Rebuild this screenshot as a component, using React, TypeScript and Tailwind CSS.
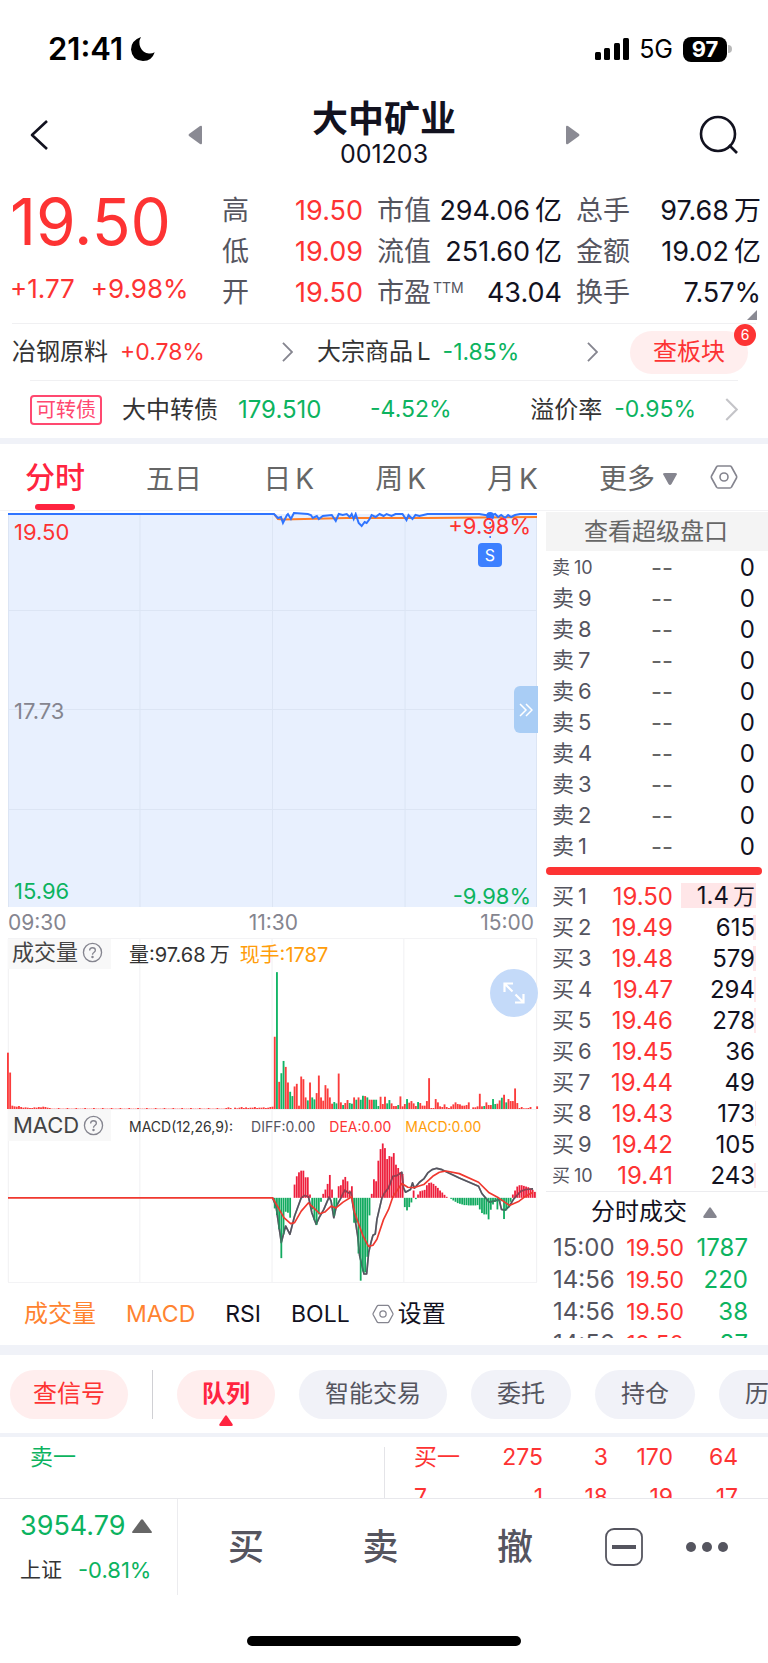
import React from 'react';

const RED = 'text-[#fd3333]';
const GREEN = 'text-[#0cb35f]';

type Stat = { label: string; sup?: string; value: string; unit?: string; color?: string };

const stats: { width: string; items: Stat[] }[] = [
  {
    width: 'w-[141px]',
    items: [
      { label: '高', value: '19.50', color: RED },
      { label: '低', value: '19.09', color: RED },
      { label: '开', value: '19.50', color: RED },
    ],
  },
  {
    width: 'w-[185px]',
    items: [
      { label: '市值', value: '294.06', unit: '亿' },
      { label: '流值', value: '251.60', unit: '亿' },
      { label: '市盈', sup: 'TTM', value: '43.04' },
    ],
  },
  {
    width: 'w-[185px]',
    items: [
      { label: '总手', value: '97.68', unit: '万' },
      { label: '金额', value: '19.02', unit: '亿' },
      { label: '换手', value: '7.57%' },
    ],
  },
];

const asks = [10, 9, 8, 7, 6, 5, 4, 3, 2, 1];

const bids = [
  { level: 1, price: '19.50', size: '1.4', unit: '万', bar: 75 },
  { level: 2, price: '19.49', size: '615', bar: 3 },
  { level: 3, price: '19.48', size: '579', bar: 3 },
  { level: 4, price: '19.47', size: '294', bar: 2 },
  { level: 5, price: '19.46', size: '278', bar: 2 },
  { level: 6, price: '19.45', size: '36', bar: 0 },
  { level: 7, price: '19.44', size: '49', bar: 0 },
  { level: 8, price: '19.43', size: '173', bar: 1 },
  { level: 9, price: '19.42', size: '105', bar: 0 },
  { level: 10, price: '19.41', size: '243', bar: 2 },
];

const deals = [
  ['15:00', '19.50', '1787'],
  ['14:56', '19.50', '220'],
  ['14:56', '19.50', '38'],
  ['14:56', '19.50', '87'],
];

const priceLine =
  '0,2 267,2 271,6 274,5 276,11 280,3 281,2 284,7 287,1 301,2 304,3 306,6 310,4 312,7 316,4 325,3 329,9 332,2 336,3 340,2 343,5 345,2 347,7 349,2 352,11 355,14 358,10 360,11 363,7 365,3 369,5 373,2 377,4 380,2 385,4 389,2 396,2 400,8 402,3 406,7 409,3 413,4 417,3 421,2 473,2 479,3 484,4 489,2 492,5 495,3 499,6 502,3 505,5 509,3 514,2 531,2';

// One bar per minute, 240 minutes a day. Negative values are falling minutes.
const STEP = 6.64;

const morningVolume = [170, 110, 10, 8, 7, 9, 6, 4, 5, 4, 3, 3, 5, 4, 6, 5, 7, 6, 4, 3];
const noonVolume = [5, 3, 0, 4, 2, 4, 6, 3, 5, 3, 4, 4, 6, 3, 4, 4, 5, 3, 4, 6];
const afternoonVolume = [
  7, 218, -413, 82, -108, -145, 127, 80, -52, -39, 68, 76, 10, 98, 90, 35, -26, 80, -35, -29,
  48, 101, 35, 25, 72, 62, 35, 16, -21, -17, 107, 20, -12, 18, 27, -18, -16, 35, -28, 35,
  -28, -40, 39, -35, 28, 28, -28, -28, -9, 37, 15, 37, -17, -27, 17, 9, 9, -12, 38, 8,
  15, -30, 19, 24, 17, 9, -21, 18, 10, 10, 24, 93, 3, 3, 30, 20, 8, 6, 14, 6,
  3, 8, 14, 20, 15, 14, 10, 10, 12, 20, 0, 5, 5, 8, 46, 8, -9, 20, 12, 12,
  -30, -15, 16, 26, -34, 43, -20, 30, 24, 24, 62, 18, 3, 6, 2, 2, 3, 6, 0, 0, 8,
];
const volume = [
  ...morningVolume,
  ...Array.from({ length: 80 }, (_, i) => (i % 4 === 3 ? 3 : 1)),
  ...noonVolume,
  ...afternoonVolume,
];

const macdBars = [
  -32, -52, -95, -182, -110, -42, -45, -60, 0, 40, 65, 77, 82, 82, 62, 62, 10, -35, -68, -82,
  -50, -12, 12, 25, 42, 69, 25, -55, -28, 35, 38, 55, 63, 50, 22, 35, -75, -75, -168, -250,
  -222, -225, -178, -53, 12, 56, 50, 112, 147, 164, 150, 117, 126, 124, 135, 100, 90, 78, 72, -28,
  -38, -28, -14, 22, -4, 10, 20, 22, 24, 38, 45, 46, 42, 36, 30, 22, 16, 9, 3, 0,
  -3, -8, -12, -16, -18, -20, -22, -22, -23, -23, -23, -23, -22, -35, -46, -50, -50, -65, -36, -20,
  -12, -35, -12, -10, -64, -38, -30, -12, 10, 22, 34, 38, 38, 36, 34, 32, 28, 24, 18,
];

const diffLine =
  '38,265 48,290 64,400 77,350 90,375 104,320 124,265 134,258 146,262 156,310 169,345 178,325 192,300 208,262 214,275 222,325 230,290 242,268 255,242 266,250 274,248 280,290 294,380 300,440 313,495 321,495 327,430 334,400 340,378 347,374 352,330 367,265 375,250 387,235 400,200 412,198 427,188 432,235 438,248 453,240 459,220 465,236 480,218 493,208 505,190 518,180 532,176 548,180 600,205 658,230 668,252 690,278 704,275 720,270 727,300 738,302 751,290 764,268 785,245 800,240 822,238';
const deaLine =
  '38,265 72,325 92,343 104,340 124,305 146,280 156,290 180,313 195,308 214,290 228,296 250,278 276,262 285,310 310,380 327,412 340,408 352,390 372,330 387,300 400,262 427,222 445,233 465,234 493,225 520,200 540,188 560,184 600,192 658,218 690,250 718,265 751,288 780,275 800,260 822,248';

const Chevron = ({ className }: { className: string }) => (
  <svg viewBox="0 0 12 22" className={className} fill="none" stroke="currentColor" strokeWidth="2">
    <path d="M1 1l10 10L1 21" />
  </svg>
);

const HexNut = ({ className }: { className: string }) => (
  <svg viewBox="0 0 28 26" className={className} fill="none" stroke="#85858f" strokeWidth="1.6" strokeLinejoin="round">
    <path d="M8 2h12q1 0 1.500 1l5 9q.5 1 0 2l-5 9q-.5 1-1.500 1H8q-1 0-1.500-1l-5-9q-.5-1 0-2l5-9Q7 2 8 2z" />
    <circle cx="14" cy="13" r="4" />
  </svg>
);

const Help = () => (
  <svg viewBox="0 0 22 22" className="h-[21px] w-[21px]" fill="none" stroke="#85858f" strokeWidth="1.400">
    <circle cx="11" cy="11" r="9.500" />
    <path d="M8 9q0-3 3-3t3 2.700q0 1.300-1.600 2.300-1.400.9-1.400 2.300" />
    <circle cx="11" cy="15.700" r=".6" fill="#85858f" />
  </svg>
);

const StatusBar = () => (
  <div className="flex h-[98px] items-center justify-between pl-12 pr-[36px]">
    <div className="flex items-center gap-2 text-[31px] font-semibold text-black">
      21:41
      <svg viewBox="0 0 24 24" className="h-6 w-6" fill="#000">
        <path d="M10 0Q7 5 9.500 10.500T18 16.500q3 .3 5.700-1.200Q21 24 12 24 1 23.500 0 12.500 0 3.500 10 0z" />
      </svg>
    </div>
    <div className="flex items-center gap-[10px]">
      <svg viewBox="0 0 34 24" className="h-6 w-[34px]" fill="#000">
        <rect x="0" y="15" width="6" height="8" rx="1.500" />
        <rect x="9" y="11" width="6" height="12" rx="1.500" />
        <rect x="19" y="6" width="6" height="17" rx="1.500" />
        <rect x="28" y="1" width="6" height="22" rx="1.500" />
      </svg>
      <span className="text-[25px] leading-7 text-black">5G</span>
      <span className="flex items-center gap-px">
        <span className="flex h-[25px] w-[44px] items-center justify-center rounded-lg bg-black text-[22px] font-bold text-white">97</span>
        <span className="h-2 w-1 rounded-r-full bg-[#b9b9b9]" />
      </span>
    </div>
  </div>
);

const Header = () => (
  <header className="mb-2 flex h-[74px] items-center justify-between px-[29px] text-[#12121f]">
    <button aria-label="返回" className="w-[40px]">
      <svg viewBox="0 0 20 30" className="h-[30px] w-5" fill="none" stroke="currentColor" strokeWidth="2.600" strokeLinejoin="round">
        <path d="M18 1L3 15l15 14" />
      </svg>
    </button>
    <div className="flex w-[392px] items-center justify-between">
      <button aria-label="上一只">
        <svg viewBox="0 0 14 20" className="h-5 w-[14px]" fill="#8a8a93">
          <path d="M12 1q2-1 2 1v16q0 2-2 1L1 11q-1-1 0-2z" />
        </svg>
      </button>
      <div className="flex flex-col items-center pb-1">
        <h1 className="text-[36px] font-bold leading-[42px]">大中矿业</h1>
        <span className="text-[25px] leading-7">001203</span>
      </div>
      <button aria-label="下一只">
        <svg viewBox="0 0 14 20" className="h-5 w-[14px]" fill="#8a8a93">
          <path d="M2 1Q0 0 0 2v16q0 2 2 1l11-8q1-1 0-2z" />
        </svg>
      </button>
    </div>
    <button aria-label="搜索" className="w-[40px]">
      <svg viewBox="0 0 40 40" className="h-10 w-10" fill="none" stroke="currentColor" strokeWidth="2.600">
        <circle cx="19" cy="19" r="17" />
        <path d="M30 30l8 8" />
      </svg>
    </button>
  </header>
);

const Quote = () => (
  <section className="relative flex h-[143px] justify-between pl-[10px] pr-[7px] pt-[10px]">
    <div className="text-[#fd3333]">
      <div className="text-[64px] leading-[64px]">19.50</div>
      <div className="flex gap-4 pt-[15px] text-[26px] leading-10">
        <span>+1.77</span>
        <span>+9.98%</span>
      </div>
    </div>
    <div className="flex gap-[14px]">
      {stats.map((col) => (
        <dl key={col.items[0].label} className={col.width}>
          {col.items.map((s) => (
            <div key={s.label} className="flex h-[41px] items-center justify-between whitespace-nowrap leading-[41px]">
              <dt className="flex text-[27px] text-[#55555f]">
                {s.label}
                {s.sup && <sup className="top-0 pl-0.5 pt-1 text-[14px] leading-6">{s.sup}</sup>}
              </dt>
              <dd className={`text-[27px] ${s.color || 'text-[#12121f]'}`}>
                {s.value}
                {s.unit && <span className="pl-[5px]">{s.unit}</span>}
              </dd>
            </div>
          ))}
        </dl>
      ))}
    </div>
    <svg viewBox="0 0 10 10" className="absolute bottom-[3px] right-[11px] h-[10px] w-[10px]" fill="#8a8a93">
      <path d="M10 0v10H0z" />
    </svg>
  </section>
);

const Related = () => (
  <section className="text-[24px] text-[#333]">
    <div className="mx-3 flex h-[57px] items-center border-t border-[#f0f0f2]">
      <a href="#sector" className="flex w-[305px] items-center whitespace-nowrap pr-6">
        冶钢原料
        <span className={`flex-1 pl-3 text-[23px] ${RED}`}>+0.78%</span>
        <Chevron className="h-5 w-[11px] text-[#85858f]" />
      </a>
      <a href="#commodity" className="flex flex-1 items-center whitespace-nowrap pr-[32px]">
        大宗商品<span className="pl-1">L</span>
        <span className={`flex-1 pl-3 text-[23px] ${GREEN}`}>-1.85%</span>
        <Chevron className="h-5 w-[11px] text-[#85858f]" />
      </a>
      <button className={`relative mr-2 h-[43px] w-[118px] rounded-full bg-[#ffeeee] ${RED}`}>
        查板块
        <span className="absolute -right-2 -top-[7px] flex h-[22px] w-[22px] items-center justify-center rounded-full bg-[#fd3333] text-[14px] text-white">6</span>
      </button>
    </div>
    <a href="#bond" className="mx-[30px] flex h-[58px] items-center whitespace-nowrap border-t border-[#f0f0f2]">
      <span className="flex h-[30px] w-[72px] items-center justify-center rounded border-2 border-[#ff4970] text-[20px] text-[#ff4970]">可转债</span>
      <span className="pl-5">大中转债</span>
      <span className={`w-[152px] pl-5 ${GREEN}`}>179.510</span>
      <span className={`flex-1 text-[23px] ${GREEN}`}>-4.52%</span>
      <span>溢价率</span>
      <span className={`pl-3 pr-[29px] text-[23px] ${GREEN}`}>-0.95%</span>
      <Chevron className="h-[23px] w-[13px] text-[#c4c4c8]" />
    </a>
  </section>
);

const Tabs = () => (
  <nav className="flex h-[67px] items-center whitespace-nowrap border-b border-[#f3f3f5] pl-[25px] pr-[30px] text-[28px] text-[#666]">
    <div className="flex h-full flex-1 items-center justify-between pr-[33px]">
      <button className="relative h-full text-[30px] font-medium text-[#ff2440]">
        分时
        <span className="absolute bottom-0 left-[10px] h-[6px] w-10 rounded-full bg-[#ff2440]" />
      </button>
      <button className="pt-1">五日</button>
      <button className="pt-1">日<span className="pl-1">K</span></button>
      <button className="pt-1">周<span className="pl-1">K</span></button>
      <button className="pt-1">月<span className="pl-1">K</span></button>
      <button className="flex items-center gap-2 pt-1">
        更多
        <svg viewBox="0 0 14 12" className="h-3 w-[14px]" fill="#85858f">
          <path d="M2 0h10q3 0 1.500 2L8.500 11Q7 13 5.500 11L.5 2Q-1 0 2 0z" />
        </svg>
      </button>
    </div>
    <button aria-label="图表设置">
      <HexNut className="h-[28px] w-[28px]" />
    </button>
  </nav>
);

const PriceChart = () => (
  <div className="relative h-[395px] text-[22px] leading-7">
    <svg viewBox="0 0 531 395" preserveAspectRatio="none" className="h-full w-full">
      <rect y="2" width="531" height="393" fill="#e8f0fe" />
      <path d="M132.500 2v393M265.500 2v393M398.500 2v393M0 98.500h531M0 197.500h531M0 297.500h531M.5 2v393M530.500 2v393" stroke="#dce5f4" fill="none" />
      <polyline points="267,2 271,7 276,7.500 340,6 420,6 531,5" fill="none" stroke="#ff7d26" strokeWidth="2" />
      <polyline points={priceLine} fill="none" stroke="#2f74ff" strokeWidth="2" />
      <circle cx="484" cy="4" r="4" fill="#2f74ff" />
      <path d="M484 10v20" stroke="#2f74ff" strokeWidth="1.500" strokeDasharray="2 5" />
    </svg>
    <span className={`absolute left-[6px] top-[6px] ${RED}`}>19.50</span>
    <span className={`absolute right-[6px] top-0 ${RED}`}>+9.98%</span>
    <span className="absolute left-[6px] top-[185px] text-[#85858f]">17.73</span>
    <span className={`absolute bottom-[2px] left-[6px] ${GREEN}`}>15.96</span>
    <span className={`absolute -bottom-[3px] right-[6px] ${GREEN}`}>-9.98%</span>
    <span className="absolute right-[35px] top-[31px] flex h-6 w-6 items-center justify-center rounded bg-[#3d80ff] text-[16px] text-white">S</span>
    <button aria-label="展开" className="absolute -right-px top-[174px] flex h-[47px] w-6 items-center justify-center rounded-l-md bg-[#a9cdf5]">
      <svg viewBox="0 0 14 14" className="h-[14px] w-[14px]" fill="none" stroke="#fff" strokeWidth="1.500">
        <path d="M1 1l6 6-6 6M7 1l6 6-6 6" />
      </svg>
    </button>
  </div>
);

const VolumeChart = () => (
  <div className="relative h-[172px] border-y border-[#f3f3f5]">
    <svg viewBox="0 0 1593 513" preserveAspectRatio="none" className="h-full w-full overflow-visible">
      <path d="M1 0v513M397 0v513M795 0v513M1192 0v513M1592 0v513" stroke="#f0f0f2" strokeWidth="3" />
      {volume.map((v, i) => (
        <rect key={i} x={i * STEP - 3} y={513 - Math.abs(v)} width="5.600" height={Math.abs(v)} fill={v < 0 ? '#12b566' : '#fb3c3c'} />
      ))}
    </svg>
    <div className="absolute left-0 top-0 flex items-start gap-[18px] whitespace-nowrap text-[20px] leading-8 text-[#333]">
      <span className="flex h-[30px] w-[103px] items-center gap-1 bg-[#f8f8f8] pb-1 pl-1 text-[22px] text-[#444]">
        成交量
        <Help />
      </span>
      <span>量:97.68<span className="pl-1">万</span></span>
      <span className="-ml-2 text-[#ff9d0a]">现手:1787</span>
    </div>
    <button aria-label="全屏" className="absolute -right-px top-[30px] flex h-12 w-12 items-center justify-center rounded-full bg-[#c4daf9]">
      <svg viewBox="0 0 24 24" className="h-6 w-6" fill="none" stroke="#fff" strokeWidth="2.200">
        <path d="M11 2.500H2.500V11M2.500 2.500l8 8M13 21.500h8.500V13M21.500 21.500l-8-8" />
      </svg>
    </button>
  </div>
);

const MacdChart = () => (
  <div className="relative h-[173px] border-b border-[#f3f3f5]">
    <svg viewBox="0 0 1593 519" preserveAspectRatio="none" className="h-full w-full overflow-visible">
      <path d="M1 0v519M397 0v519M795 0v519M1192 0v519M1592 0v519" stroke="#f0f0f2" strokeWidth="3" />
      <g transform="translate(759 0)" fill="none" strokeWidth="5" strokeLinejoin="round">
        <polyline points={diffLine} stroke="#55555f" />
      </g>
      {macdBars.map((v, i) => (
        <rect key={i} x={(i + 121) * STEP - 3} y={v > 0 ? 265 - v : 265} width="5.400" height={Math.abs(v)} fill={v < 0 ? '#12aa60' : '#ee1f3c'} />
      ))}
      <g transform="translate(759 0)" fill="none" strokeWidth="5" strokeLinejoin="round">
        <polyline points={diffLine} stroke="#55555f" strokeOpacity=".5" />
        <polyline points={'-759,265 ' + deaLine} stroke="#f0382f" />
      </g>
    </svg>
    <div className="absolute left-0 top-0 flex items-center whitespace-nowrap text-[14px] text-[#55555f]">
      <span className="flex h-[31px] w-[103px] items-center gap-1 bg-[#f8f8f8] pl-[5px] text-[22px] text-[#444]">
        MACD
        <Help />
      </span>
      <span className="pl-[18px] pt-0.5 text-[#333]">MACD(12,26,9):</span>
      <span className="pl-[18px] pt-0.5">DIFF:0.00</span>
      <span className={`pl-[14px] pt-0.5 ${RED}`}>DEA:0.00</span>
      <span className="pl-[14px] pt-0.5 text-[#ff9d0a]">MACD:0.00</span>
    </div>
  </div>
);

const LevelCell = ({ side, level }: { side: string; level: number }) => (
  <th scope="row" className={`w-[50px] whitespace-nowrap p-0 text-left font-normal text-[#55555f] ${level === 10 ? 'text-[18px]' : 'text-[22px]'}`}>
    {side}
    <span className="pl-1">{level}</span>
  </th>
);

const OrderBook = () => (
  <aside className="h-[826px] w-[222px] overflow-hidden text-[24px] text-[#12121f]">
    <button className="block h-[39px] w-full bg-[#f4f4f4] pr-0.5 text-[24px] text-[#666]">查看超级盘口</button>
    <div className="pl-[6px] pr-[13px] pt-px">
      <table className="w-full">
        <tbody>
          {asks.map((level) => (
            <tr key={level} className="h-[31px] leading-[31px]">
              <LevelCell side="卖" level={level} />
              <td className="p-0 pr-0.5 text-right text-[#666]">--</td>
              <td className="w-[80px] p-0 text-right">0</td>
            </tr>
          ))}
        </tbody>
      </table>
    </div>
    <div className="mb-[5px] mr-[6px] mt-[5px] h-2 rounded-full bg-[#fd3333]" />
    <div className="pl-[6px] pr-[13px]">
      <table className="w-full">
        <tbody>
          {bids.map((b) => (
            <tr key={b.level} className="h-[31px] leading-[31px]">
              <LevelCell side="买" level={b.level} />
              <td className={`p-0 pr-0.5 text-right ${RED}`}>{b.price}</td>
              <td className="relative w-[80px] p-0 text-right">
                <span className="absolute -right-px top-[3px] h-[25px] bg-[#ffe6e8]" style={{ width: b.bar }} />
                <span className="relative">
                  {b.size}
                  {b.unit && <span className="pl-1 text-[22px]">{b.unit}</span>}
                </span>
              </td>
            </tr>
          ))}
        </tbody>
      </table>
    </div>
    <button className="flex h-[41px] w-full items-center gap-4 border-t border-[#ececef] pl-[45px]">
      分时成交
      <svg viewBox="0 0 14 11" className="h-[11px] w-[14px]" fill="#85858f">
        <path d="M6 1q1-1.300 2 0l5.500 8q.8 2-1 2h-11q-1.800 0-1-2z" />
      </svg>
    </button>
    <table className="ml-[7px] w-[195px]">
      <tbody>
        {deals.map(([time, price, size], i) => (
          <tr key={i} className="h-8 leading-8">
            <td className="p-0 text-[#55555f]">{time}</td>
            <td className={`p-0 text-right text-[23px] ${RED}`}>{price}</td>
            <td className={`w-[64px] p-0 text-right ${GREEN}`}>{size}</td>
          </tr>
        ))}
      </tbody>
    </table>
  </aside>
);

const Indicators = () => (
  <div className="flex h-[62px] items-center whitespace-nowrap pl-4 text-[23px] text-[#12121f]">
    <button className="text-[24px] text-[#ff8330]">成交量</button>
    <button className="pl-[30px] text-[#ff8330]">MACD</button>
    <button className="pl-[30px]">RSI</button>
    <button className="pl-[30px]">BOLL</button>
    <button className="flex items-center gap-1 pl-[22px] text-[24px]">
      <HexNut className="h-[22px] w-[22px]" />
      设置
    </button>
  </div>
);

const Pills = () => (
  <nav className="flex h-[78px] items-center gap-6 overflow-hidden whitespace-nowrap pl-[10px] text-[24px] text-[#55555f]">
    <button className={`h-[49px] shrink-0 rounded-full bg-[#ffeeee] px-[23px] ${RED}`}>查信号</button>
    <span className="h-[49px] w-px shrink-0 bg-[#d0d0d4]" />
    <button className="relative h-[49px] shrink-0 rounded-full bg-[#ffeeee] px-[25px] font-bold text-[#ff2440]">
      队列
      <svg viewBox="0 0 14 11" className="absolute -bottom-[7px] left-[42px] h-[11px] w-[14px]" fill="#ff2440">
        <path d="M6 1q1-1.300 2 0l5.500 8q.8 2-1 2h-11q-1.800 0-1-2z" />
      </svg>
    </button>
    {['智能交易', '委托', '持仓', '历史'].map((label) => (
      <button key={label} className="h-[49px] shrink-0 rounded-full bg-[#f1f2f8] px-[26px]">{label}</button>
    ))}
  </nav>
);

const Queue = () => (
  <section className="flex h-[61px] overflow-hidden text-[23px] leading-10">
    <div className={`w-1/2 pl-[30px] ${GREEN}`}>卖一</div>
    <div className="mt-[10px] w-px bg-[#e4e4e8]" />
    <div className="flex-1 pl-[29px] pr-[30px]">
      <table className={`h-20 w-full ${RED}`}>
        <tbody>
          <tr>
            <th scope="row" className="p-0 text-left font-normal">买一</th>
            <td className="w-[65px] p-0 text-right">275</td>
            <td className="w-[65px] p-0 text-right">3</td>
            <td className="w-[65px] p-0 text-right">170</td>
            <td className="w-[65px] p-0 text-right">64</td>
          </tr>
          <tr>
            <td className="p-0">7</td>
            <td className="p-0 text-right">1</td>
            <td className="p-0 text-right">18</td>
            <td className="p-0 text-right">19</td>
            <td className="p-0 text-right">17</td>
          </tr>
        </tbody>
      </table>
    </div>
  </section>
);

const BottomBar = () => (
  <footer>
    <div className="flex h-[97px] border-t border-[#e8e8ec] text-[#55555f]">
      <a href="#index" className="block w-[178px] whitespace-nowrap border-r border-[#ececef] pl-5">
        <span className={`flex h-[54px] items-center gap-[6px] text-[27px] ${GREEN}`}>
          3954.79
          <svg viewBox="0 0 20 14" className="h-[14px] w-5" fill="#666">
            <path d="M9 .8q1-1.200 2 0l9 12.200q0 1-1 1H1q-1 0-1-1z" />
          </svg>
        </span>
        <span className="flex h-[34px] items-center text-[21px] text-[#333]">
          上证
          <span className={`pl-4 text-[22px] ${GREEN}`}>-0.81%</span>
        </span>
      </a>
      <div className="flex flex-1 items-center justify-between pl-[50px] pr-[40px]">
        <div className="flex w-[305px] justify-between text-[36px] font-medium">
          <button>买</button>
          <button>卖</button>
          <button>撤</button>
        </div>
        <div className="flex items-center gap-[43px]">
          <button aria-label="收起">
            <svg viewBox="0 0 38 38" className="h-[38px] w-[38px]" fill="none" stroke="currentColor">
              <rect x="1" y="1" width="36" height="36" rx="8" strokeWidth="1.800" />
              <path d="M7 19h24" strokeWidth="4" />
            </svg>
          </button>
          <button aria-label="更多">
            <svg viewBox="0 0 42 10" className="h-[10px] w-[42px]" fill="currentColor">
              <circle cx="5" cy="5" r="5" />
              <circle cx="21" cy="5" r="5" />
              <circle cx="37" cy="5" r="5" />
            </svg>
          </button>
        </div>
      </div>
    </div>
    <div className="flex h-[68px] items-end justify-center pb-[17px]">
      <div className="h-[10px] w-[274px] rounded-full bg-black" />
    </div>
  </footer>
);

const App: React.FC = () => {
  return (
    <div className="w-full bg-white font-['Inter','Noto_Sans_CJK_SC',sans-serif]">
      <StatusBar />
      <Header />
      <Quote />
      <Related />
      <div className="h-[6px] bg-[#f0f2f8]" />
      <Tabs />
      <main className="flex pt-px">
        <div className="min-w-0 flex-1 pl-2 pr-[9px]">
          <PriceChart />
          <div className="flex h-[31px] items-center justify-between pr-[3px] text-[21px] text-[#85858f]">
            <span>09:30</span>
            <span>11:30</span>
            <span>15:00</span>
          </div>
          <VolumeChart />
          <MacdChart />
          <Indicators />
        </div>
        <OrderBook />
      </main>
      <div className="h-[10px] bg-[#f0f2f8]" />
      <Pills />
      <div className="h-1 bg-[#f0f2f8]" />
      <Queue />
      <BottomBar />
    </div>
  );
};

export default App;
